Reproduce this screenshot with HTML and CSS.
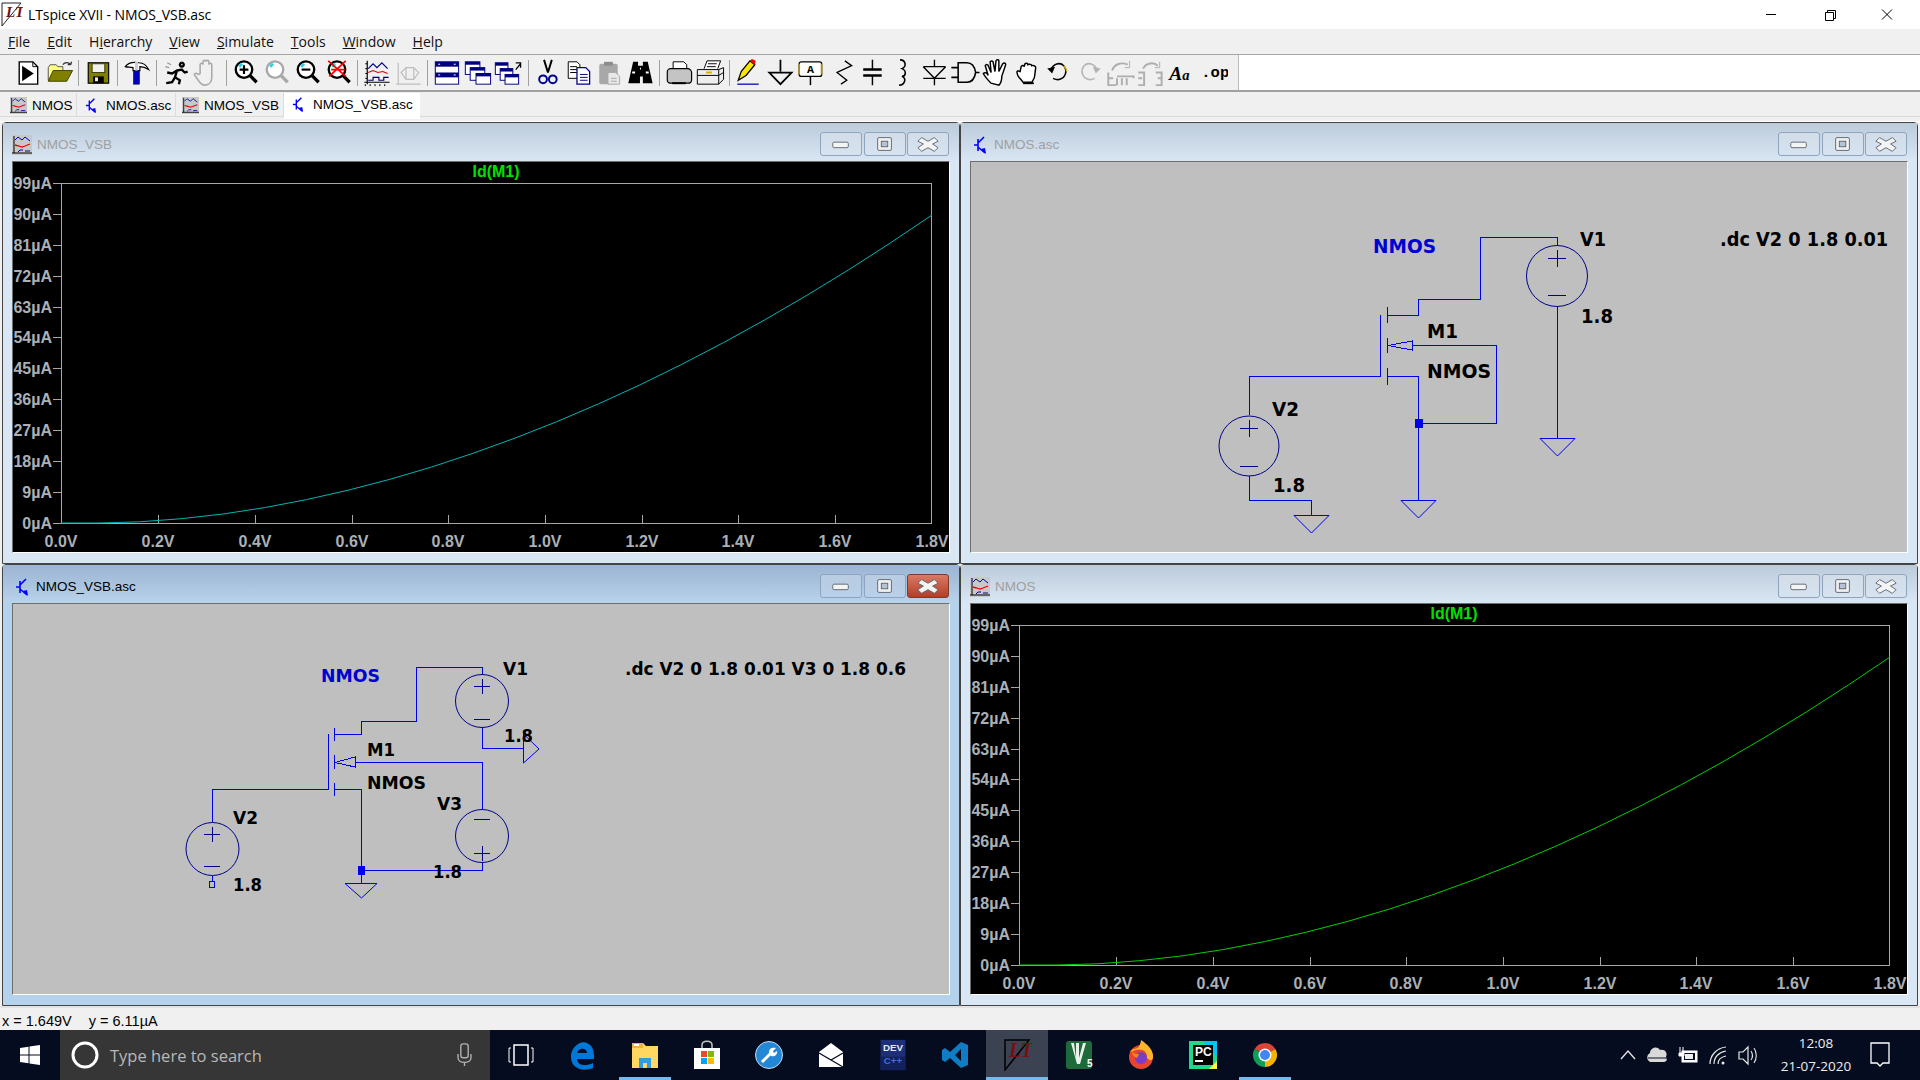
FILE: index.html
```html
<!DOCTYPE html>
<html lang="en">
<head>
<meta charset="utf-8">
<title>LTspice XVII - NMOS_VSB.asc</title>
<link rel="stylesheet" href="styles.css">
</head>
<body>
<svg class="defs" aria-hidden="true">
  <symbol id="i-plot" viewBox="0 0 20 20">
    <rect width="20" height="20" fill="#c8c8c8"/>
    <path d="M2 1v17M0 18h20" stroke="#000" fill="none"/>
    <path d="M3 5l3-3 4 3 3-3 5 4" stroke="#00c" fill="none"/>
    <path d="M3 10l4 1 3 1 3-1 5-2" stroke="#e00" stroke-width="1.3" fill="none"/>
    <path d="M6 17l2-2h3M13 16h5" stroke="#00a" fill="none"/>
  </symbol>
  <symbol id="i-sch" viewBox="0 0 14 20">
    <path d="M1 10h4M5 4v12M5 8l6-6M5 12l7 6" stroke="#00f" stroke-width="1.6" fill="none"/>
    <path d="M8 14l5 5-1-6z" fill="#00f"/>
  </symbol>
  <symbol id="b-min" viewBox="0 0 42 24">
    <rect x="12" y="10" width="17" height="6" rx="1.5" fill="#f4f4f4" stroke="#5c6470"/>
  </symbol>
  <symbol id="b-max" viewBox="0 0 42 24">
    <rect x="13" y="5" width="15" height="14" rx="1.5" fill="#f0f0f0" stroke="#5c6470"/>
    <rect x="17" y="9" width="7" height="6" fill="#b4c4d6" stroke="#5c6470"/>
  </symbol>
  <symbol id="b-close" viewBox="0 0 42 24">
    <path d="M14 5l7 4 7-4 4 4-6 3 6 4-4 4-7-4-7 4-4-4 6-4-6-3z" fill="#f4f4f4" stroke="#5c6470" stroke-linejoin="round"/>
  </symbol>
  <symbol id="i-lens" viewBox="0 0 31 36">
    <circle cx="14" cy="15" r="8.5" fill="#fff" stroke="currentColor" stroke-width="2.4"/>
    <path d="M9 12l3-3" stroke="#2fd0e0" stroke-width="3"/>
    <path d="M20 21l7 7" stroke="currentColor" stroke-width="3.4"/>
  </symbol>
</svg>

<header class="titlebar">
  <svg class="app-icon" viewBox="0 0 22 26">
    <path d="M1 1h19L1 24z" fill="#fff" stroke="#222"/>
    <text class="lt-mark" x="5" y="15">LT</text>
  </svg>
  <span class="app-title">LTspice XVII - NMOS_VSB.asc</span>
  <div class="caption">
    <svg class="cap" viewBox="0 0 58 29"><path d="M24 14.5h10" stroke="#000"/></svg>
    <svg class="cap" viewBox="0 0 58 29"><path d="M25.5 12.5h8v8h-8zM27.5 12.5v-2h8v8h-2" fill="none" stroke="#000"/></svg>
    <svg class="cap" viewBox="0 0 58 29"><path d="M24 9.5l10 10M34 9.5l-10 10" stroke="#000"/></svg>
  </div>
</header>

<nav class="menubar">
  <span><u>F</u>ile</span><span><u>E</u>dit</span><span>H<u>i</u>erarchy</span><span><u>V</u>iew</span><span><u>S</u>imulate</span><span><u>T</u>ools</span><span><u>W</u>indow</span><span><u>H</u>elp</span>
</nav>

<div class="toolrow">
  <div class="toolbar">
    <svg class="tool" viewBox="0 0 31 36"><path d="M6 7h14l5 5v18H6z" fill="#fff" stroke="#000" stroke-width="1.4"/><path d="M20 7v5h5" fill="none" stroke="#000"/><path d="M9 11l12 8-12 8z" fill="#000"/></svg>
    <svg class="tool" viewBox="0 0 31 36"><path d="M4 13l2-3h6l2 2h5v14H4z" fill="#ffff80" stroke="#555"/><path d="M4 27l5-11h20l-6 11z" fill="#808000" stroke="#404000"/><path d="M19 10c2-3 6-3 8 0M27 10l1-3M27 10l-3 0" fill="none" stroke="#333" stroke-width="1.3"/></svg>
    <i class="sep"></i>
    <svg class="tool" viewBox="0 0 31 36"><rect x="5" y="8" width="21" height="21" fill="#808000" stroke="#000" stroke-width="1.2"/><rect x="9" y="9" width="13" height="9" fill="#f0f0f0" stroke="#404000"/><rect x="10" y="22" width="11" height="7" fill="#000"/><rect x="12" y="23" width="3" height="4" fill="#f0f0f0"/></svg>
    <i class="sep"></i>
    <svg class="tool" viewBox="0 0 31 36"><path d="M3 12c3-4 8-5 14-4 4 0 8 3 10 7-3-2-6-3-9-3v4h-7v-3c-3-1-5 0-8-1z" fill="#fff" stroke="#000" stroke-width="1.2"/><rect x="11.5" y="16" width="6" height="14" fill="#0000c0" stroke="#000" stroke-width=".6"/><path d="M13 7h3v9h-3z" fill="#ccc"/></svg>
    <i class="sep"></i>
    <svg class="tool" viewBox="0 0 31 36"><path d="M5 29l6-1 3-5 5 3-1 4M14 23l2-7 5-1 3 3 3-1M16 16l-5 3-5-1M21 8a2 2 0 1 0 .1 0" fill="none" stroke="#000" stroke-width="2.4"/><path d="M6 8l4 2M4 12l4 1" stroke="#999" stroke-width="1.3"/></svg>
    <svg class="tool" viewBox="0 0 31 36"><path d="M9 19v-9a1.5 1.5 0 0 1 3 0v-3a1.5 1.5 0 0 1 3 0v0a1.5 1.5 0 0 1 3 0v3a1.5 1.5 0 0 1 3 0v13c0 5-3 8-7 8-3 0-5-2-7-5l-4-6c1-2 3-1 4 0z" fill="#f0f0f0" stroke="#aaa" stroke-width="1.6"/></svg>
    <i class="sep"></i>
    <svg class="tool lens-on" viewBox="0 0 31 36"><use href="#i-lens"/><path d="M9.5 15h9M14 10.5v9" stroke="#000" stroke-width="2.2"/></svg>
    <svg class="tool lens-off" viewBox="0 0 31 36"><use href="#i-lens"/></svg>
    <svg class="tool lens-on" viewBox="0 0 31 36"><use href="#i-lens"/><path d="M9.5 15h9" stroke="#000" stroke-width="2.2"/></svg>
    <svg class="tool lens-on" viewBox="0 0 31 36"><use href="#i-lens"/><path d="M5 6l18 16M23 6L6 22M8 15h14" stroke="#f00" stroke-width="1.8"/></svg>
    <i class="sep"></i>
    <svg class="tool" viewBox="0 0 31 36"><path d="M5 6v24M2 28h26" stroke="#000" stroke-width="1.2"/><path d="M3 30v2M8 30v2M13 30v2M18 30v2M23 30v2M3 9h2M3 14h2M3 19h2M3 24h2" stroke="#000"/><path d="M6 14l5-5 4 4 5-5 6 6" stroke="#000080" fill="none" stroke-width="1.2"/><path d="M6 18l5-2 5 2 5-1 5 2" stroke="#e00000" fill="none" stroke-width="1.2"/><path d="M6 26h5v-3h6v3h5v-3h5" stroke="#000060" fill="none" stroke-width="1.2"/></svg>
    <svg class="tool" viewBox="0 0 31 36"><path d="M5 8v22M3 30h25M8 18l5-5h8l5 5-5 7h-8zM13 13v12M21 13v12" fill="none" stroke="#bdbdbd" stroke-width="1.2"/></svg>
    <i class="sep"></i>
    <svg class="tool" viewBox="0 0 31 36"><rect x="3" y="7" width="24" height="23" fill="#fff" stroke="#000080"/><rect x="3" y="7" width="24" height="5" fill="#000080"/><rect x="3" y="18" width="24" height="5" fill="#000080"/><path d="M6 9.5h2M22 9.5h2M6 20.5h2M22 20.5h2" stroke="#fff"/></svg>
    <svg class="tool" viewBox="0 0 31 36"><rect x="2" y="7" width="15" height="13" fill="#fff" stroke="#000080"/><rect x="2" y="7" width="15" height="3" fill="#000080"/><rect x="7" y="13" width="15" height="13" fill="#fff" stroke="#000080"/><rect x="7" y="13" width="15" height="3" fill="#000080"/><rect x="13" y="19" width="15" height="11" fill="#fff" stroke="#000080"/><rect x="13" y="19" width="15" height="3" fill="#000080"/></svg>
    <svg class="tool" viewBox="0 0 31 36"><rect x="2" y="8" width="13" height="12" fill="#fff" stroke="#000080"/><rect x="2" y="8" width="13" height="3" fill="#000080"/><rect x="7" y="14" width="13" height="12" fill="#fff" stroke="#000080"/><rect x="7" y="14" width="13" height="3" fill="#000080"/><rect x="12" y="20" width="14" height="10" fill="#fff" stroke="#000080"/><rect x="12" y="20" width="14" height="3" fill="#000080"/><path d="M23 15l5-6M23 8h5v5" fill="none" stroke="#000" stroke-width="1.3"/></svg>
    <i class="sep"></i>
    <svg class="tool" viewBox="0 0 31 36"><path d="M12 5l4 13M20 5l-4 13" stroke="#000" stroke-width="2"/><circle cx="11" cy="25" r="4" fill="none" stroke="#000090" stroke-width="2"/><circle cx="21" cy="25" r="4" fill="none" stroke="#000090" stroke-width="2"/></svg>
    <svg class="tool" viewBox="0 0 31 36"><path d="M5 7h9l3 3v14H5z" fill="#fff" stroke="#000"/><path d="M7 12h7M7 15h7M7 18h7" stroke="#000"/><path d="M14 13h9l4 4v13H14z" fill="#fff" stroke="#000080" stroke-width="1.3"/><path d="M17 20h8M17 23h8M17 26h8" stroke="#000080"/></svg>
    <svg class="tool" viewBox="0 0 31 36"><rect x="5" y="9" width="19" height="21" rx="2" fill="#a8a8a8"/><rect x="10" y="7" width="9" height="4" fill="#8c8c8c"/><path d="M14 18h8l4 4v8H14z" fill="#e8e8e8" stroke="#a8a8a8"/><path d="M17 24h6M17 27h6" stroke="#a8a8a8"/></svg>
    <svg class="tool" viewBox="0 0 31 36"><path d="M8 7h5v4h5V7h5l5 22h-10v-7h-3v7H3z" fill="#000"/><path d="M7 18h3M21 18h3M15 14h1" stroke="#fff" stroke-width="2"/></svg>
    <i class="sep"></i>
    <svg class="tool" viewBox="0 0 31 36"><path d="M9 15V7h11l3 3v5" fill="#fff" stroke="#000"/><path d="M3 17c0-2 2-3 3-3h18c2 0 4 2 4 4v8c0 2-2 3-3 3H6c-2 0-3-2-3-3z" fill="#c4c4c4" stroke="#000" stroke-width="1.2"/><path d="M8 29h14" stroke="#000" stroke-width="2"/></svg>
    <svg class="tool" viewBox="0 0 31 36"><path d="M9 14l3-8h14l-3 8" fill="#fff" stroke="#000"/><path d="M13 9h9M12 12h9" stroke="#000"/><path d="M2 15h22l5-2v12l-5 5H2z" fill="#eee" stroke="#000"/><path d="M2 21h22M24 15v15M24 21l5-3" stroke="#000"/><path d="M11 18h6" stroke="#d8b000" stroke-width="2"/></svg>
    <i class="sep"></i>
    <svg class="tool" viewBox="0 0 31 36"><path d="M4 26l3-9 9-11 5 4-9 11z" fill="#f8e800" stroke="#000" stroke-width="1.3"/><path d="M16 6l2-2 4 2-1 4z" fill="#f00000"/><path d="M3 30h22" stroke="#0000c0" stroke-width="1.3"/></svg>
    <svg class="tool" viewBox="0 0 31 36"><path d="M15.5 5v12M4 18h23L15.5 30z" fill="none" stroke="#000" stroke-width="1.8"/></svg>
    <svg class="tool" viewBox="0 0 31 36"><rect x="4" y="7" width="23" height="15" rx="2" fill="#fff" stroke="#000" stroke-width="1.4"/><path d="M4 9v11M27 9v11" stroke="#b09000" stroke-width="1.6"/><text class="tool-a" x="15.5" y="19">A</text><path d="M15.5 22v9" stroke="#000" stroke-width="1.5"/></svg>
    <svg class="tool" viewBox="0 0 31 36"><path d="M19 6l7 5-15 7 10 8-6 4" fill="none" stroke="#000" stroke-width="1.4"/></svg>
    <svg class="tool" viewBox="0 0 31 36"><path d="M15.5 5v10M15.5 21v10" stroke="#000" stroke-width="1.5"/><path d="M6 15h19M6 21h19" stroke="#000" stroke-width="2.6"/></svg>
    <svg class="tool" viewBox="0 0 31 36"><path d="M12 5c6 0 7 7 2 9 5 2 4 8 0 8 5 2 3 9-3 9" fill="none" stroke="#000" stroke-width="1.6"/></svg>
    <svg class="tool" viewBox="0 0 31 36"><path d="M15.5 5v7M15.5 24v7M4 12h23M4 24h23M4 12l11.5 12L27 12" fill="none" stroke="#000" stroke-width="1.4"/></svg>
    <svg class="tool" viewBox="0 0 31 36"><path d="M8 8h9c5 0 8 4 9 10-1 6-4 10-9 10H8zM1 13h7M1 23h7M26 18h4" fill="none" stroke="#000" stroke-width="1.6"/></svg>
    <svg class="tool" viewBox="0 0 31 36"><path d="M10 29c-3-3-6-6-8-10 2-2 4 0 5 2L4 11c1-2 3-1 3 0l3 7-1-11c2-2 3 0 3 0l2 10 1-11c1-2 3-1 3 0v11l4-8c2-2 3 0 3 1l-4 12c0 4-1 7-3 9z" fill="#fff" stroke="#000" stroke-width="1.5"/></svg>
    <svg class="tool" viewBox="0 0 31 36"><path d="M11 28c-2-3-6-6-6-9-1-3 1-3 3-2l1-5c1-2 3-1 3 0l1-3c2-1 3 0 3 1 2-1 4 0 4 1 2-1 4 1 4 2l-1 8c0 3-2 5-3 7z" fill="#fff" stroke="#000" stroke-width="1.5"/><path d="M11 29h11" stroke="#000" stroke-width="2"/></svg>
    <svg class="tool" viewBox="0 0 31 36"><path d="M8 15c2-6 9-8 13-4 4 5 2 12-4 14-3 1-5 0-7-1" fill="none" stroke="#000" stroke-width="1.6"/><path d="M21 11c2 2 3 4 3 6" fill="none" stroke="#d8b000" stroke-width="1.6"/><path d="M4 14l8-2-3 7z" fill="#000"/></svg>
    <svg class="tool" viewBox="0 0 31 36"><path d="M23 15c-2-6-9-8-13-4-4 5-2 12 4 14 3 1 5 0 7-1" fill="none" stroke="#b4b4b4" stroke-width="1.6"/><path d="M27 14l-8-2 3 7z" fill="#b4b4b4"/></svg>
    <svg class="tool" viewBox="0 0 31 36"><path d="M4 18V31h8M4 24h5M13 24v7M18 24v7M23 24v7M13 22h17v2M8 16c2-7 10-9 16-6" fill="none" stroke="#aeaeae" stroke-width="2"/><path d="M26 6v7h-5" fill="none" stroke="#aeaeae"/></svg>
    <svg class="tool" viewBox="0 0 31 36"><path d="M3 18h6v13H3M3 24h4M21 18h6v13h-6M23 24h4M8 14c3-6 11-7 15-3" fill="none" stroke="#aeaeae" stroke-width="2"/><path d="M25 7v6h-5" fill="none" stroke="#aeaeae"/></svg>
    <svg class="tool" viewBox="0 0 31 36"><text class="tool-aa" x="3" y="26">A<tspan class="tool-aa-s">a</tspan></text></svg>
    <svg class="tool" viewBox="0 0 31 36"><text class="tool-op" x="4" y="23">.op</text></svg>
  </div>
  <div class="toolfill"></div>
</div>

<div class="tabs">
  <div class="tab"><svg class="ti-plot"><use href="#i-plot"/></svg>NMOS</div>
  <div class="tab"><svg class="ti-sch"><use href="#i-sch"/></svg>NMOS.asc</div>
  <div class="tab"><svg class="ti-plot"><use href="#i-plot"/></svg>NMOS_VSB</div>
  <div class="tab tab-on"><svg class="ti-sch"><use href="#i-sch"/></svg>NMOS_VSB.asc</div>
</div>

<main class="mdi">
  <!-- top-left: plot -->
  <section class="win">
    <div class="win-title">
      <svg class="wi-plot"><use href="#i-plot"/></svg><span class="win-name">NMOS_VSB</span>
      <div class="win-btns">
        <svg class="wb"><use href="#b-min"/></svg><svg class="wb"><use href="#b-max"/></svg><svg class="wb"><use href="#b-close"/></svg>
      </div>
    </div>
    <div class="client plot">
      <svg class="canvas" viewBox="13 162 936 390">
        <text class="trace-name" x="496" y="177">Id(M1)</text>
        <rect class="axis" x="61.5" y="183.5" width="870" height="340"/>
        <path class="axis" d="M53 183.5h8M53 214.5h8M53 245.5h8M53 276.5h8M53 307.5h8M53 337.5h8M53 368.5h8M53 399.5h8M53 430.5h8M53 461.5h8M53 492.5h8M53 523.5h8M158.5 515v8M255.5 515v8M352.5 515v8M448.5 515v8M545.5 515v8M642.5 515v8M738.5 515v8M835.5 515v8"/>
        <g class="ylab">
          <text x="52" y="189">99µA</text><text x="52" y="220">90µA</text><text x="52" y="251">81µA</text><text x="52" y="282">72µA</text><text x="52" y="313">63µA</text><text x="52" y="343">54µA</text><text x="52" y="374">45µA</text><text x="52" y="405">36µA</text><text x="52" y="436">27µA</text><text x="52" y="467">18µA</text><text x="52" y="498">9µA</text><text x="52" y="529">0µA</text>
        </g>
        <g class="xlab">
          <text x="61" y="547">0.0V</text><text x="158" y="547">0.2V</text><text x="255" y="547">0.4V</text><text x="352" y="547">0.6V</text><text x="448" y="547">0.8V</text><text x="545" y="547">1.0V</text><text x="642" y="547">1.2V</text><text x="738" y="547">1.4V</text><text x="835" y="547">1.6V</text><text x="932" y="547">1.8V</text>
        </g>
        <polyline class="curve curve-teal" points="61,523 98,523 139.7,521.8 181.4,518.7 223.1,514 264.8,507.6 306.5,499.6 348.2,490.2 389.9,479.3 431.6,467 473.3,453.2 515,438.1 556.7,421.7 598.4,403.9 640.1,384.8 681.8,364.3 723.5,342.6 765.2,319.6 806.9,295.3 848.6,269.8 890.3,243 932,215"/>
      </svg>
    </div>
  </section>

  <!-- top-right: schematic -->
  <section class="win">
    <div class="win-title">
      <svg class="wi-sch"><use href="#i-sch"/></svg><span class="win-name">NMOS.asc</span>
      <div class="win-btns">
        <svg class="wb"><use href="#b-min"/></svg><svg class="wb"><use href="#b-max"/></svg><svg class="wb"><use href="#b-close"/></svg>
      </div>
    </div>
    <div class="client sch">
      <svg class="canvas" viewBox="971 162 936 390">
        <path class="wire" d="M1557.5 245V237.5H1480.5V299.5H1418.5V315.5H1387.5M1557.5 306V438M1387.5 376.5H1418.5V500M1418.5 423.5H1496.5V345.5H1412M1380.5 376.5H1249.5V415M1249.5 476V500.5H1311.5V515"/>
        <path class="wire" d="M1387.5 307V323M1380.5 315V376M1387.5 338V353M1387.5 368V385"/>
        <path class="wire" d="M1388 345.5L1412 341V350z"/>
        <rect class="dot" x="1415" y="419" width="8" height="9"/>
        <path class="gnd" d="M1540 438.5H1575L1557.5 456zM1401 500.5H1436L1418.5 518zM1294 515.5H1329L1311.5 533z"/>
        <circle class="src" cx="1557" cy="276" r="30.5"/>
        <circle class="src" cx="1249" cy="446" r="30"/>
        <path class="src" d="M1548 258.5h18M1557.5 250v17M1548 295.5h18M1240 428.5h18M1249.5 420v17M1240 466.5h18"/>
        <text class="blue-lbl big" x="1373" y="253" textLength="63" lengthAdjust="spacingAndGlyphs">NMOS</text>
        <text class="lbl big" x="1580" y="246" textLength="26" lengthAdjust="spacingAndGlyphs">V1</text>
        <text class="lbl big" x="1581" y="323" textLength="32" lengthAdjust="spacingAndGlyphs">1.8</text>
        <text class="lbl big" x="1427" y="338" textLength="31" lengthAdjust="spacingAndGlyphs">M1</text>
        <text class="lbl big" x="1427" y="378" textLength="64" lengthAdjust="spacingAndGlyphs">NMOS</text>
        <text class="lbl big" x="1272" y="416" textLength="27" lengthAdjust="spacingAndGlyphs">V2</text>
        <text class="lbl big" x="1273" y="492" textLength="32" lengthAdjust="spacingAndGlyphs">1.8</text>
        <text class="lbl big" transform="translate(1720 246) scale(.887 1)">.dc V2 0 1.8 0.01</text>
      </svg>
    </div>
  </section>

  <!-- bottom-left: active schematic -->
  <section class="win win-on">
    <div class="win-title">
      <svg class="wi-sch"><use href="#i-sch"/></svg><span class="win-name">NMOS_VSB.asc</span>
      <div class="win-btns">
        <svg class="wb"><use href="#b-min"/></svg><svg class="wb"><use href="#b-max"/></svg><svg class="wb wb-close"><use href="#b-close"/></svg>
      </div>
    </div>
    <div class="client sch">
      <svg class="canvas" viewBox="13 604 936 390">
        <path class="wire" d="M482.5 674V667.5H416.5V721.5H361.5V734.5H334.5M482.5 727V748.5H523M334.5 789.5H361.5V883M361.5 870.5H482.5V862M482.5 809V762.5H355M328.5 789.5H212.5V822M212.5 876V881"/>
        <path class="wire" d="M334.5 728V741M328.5 734V789M334.5 755V769M334.5 783V796"/>
        <path class="wire" d="M335 762.5L355 757V767z"/>
        <rect class="dot" x="358" y="866" width="7" height="9"/>
        <rect class="pin" x="209.5" y="881.5" width="5" height="6"/>
        <path class="gnd" d="M345 883.5H377L361.5 898zM523.5 734V763L539 749z"/>
        <circle class="src" cx="482" cy="701" r="26.5"/>
        <circle class="src" cx="482" cy="836" r="26.5"/>
        <circle class="src" cx="212.5" cy="849" r="26.5"/>
        <path class="src" d="M474 686.5h16M482.5 679v15M474 719.5h16M474 819.5h16M474 853.5h16M482.5 846v15M204 834.5h16M212.5 827v15M204 866.5h16"/>
        <text class="blue-lbl mid" x="321" y="682" textLength="59" lengthAdjust="spacingAndGlyphs">NMOS</text>
        <text class="lbl mid" x="503" y="675" textLength="25" lengthAdjust="spacingAndGlyphs">V1</text>
        <text class="lbl mid" x="625" y="675" textLength="281" lengthAdjust="spacingAndGlyphs">.dc V2 0 1.8 0.01 V3 0 1.8 0.6</text>
        <text class="lbl mid" x="504" y="742" textLength="29" lengthAdjust="spacingAndGlyphs">1.8</text>
        <text class="lbl mid" x="367" y="756" textLength="28" lengthAdjust="spacingAndGlyphs">M1</text>
        <text class="lbl mid" x="367" y="789" textLength="59" lengthAdjust="spacingAndGlyphs">NMOS</text>
        <text class="lbl mid" x="437" y="810" textLength="25" lengthAdjust="spacingAndGlyphs">V3</text>
        <text class="lbl mid" x="233" y="824" textLength="25" lengthAdjust="spacingAndGlyphs">V2</text>
        <text class="lbl mid" x="233" y="891" textLength="29" lengthAdjust="spacingAndGlyphs">1.8</text>
        <text class="lbl mid" x="433" y="878" textLength="29" lengthAdjust="spacingAndGlyphs">1.8</text>
      </svg>
    </div>
  </section>

  <!-- bottom-right: plot -->
  <section class="win">
    <div class="win-title">
      <svg class="wi-plot"><use href="#i-plot"/></svg><span class="win-name">NMOS</span>
      <div class="win-btns">
        <svg class="wb"><use href="#b-min"/></svg><svg class="wb"><use href="#b-max"/></svg><svg class="wb"><use href="#b-close"/></svg>
      </div>
    </div>
    <div class="client plot">
      <svg class="canvas" viewBox="13 162 936 390">
        <text class="trace-name" x="496" y="177">Id(M1)</text>
        <rect class="axis" x="61.5" y="183.5" width="870" height="340"/>
        <path class="axis" d="M53 183.5h8M53 214.5h8M53 245.5h8M53 276.5h8M53 307.5h8M53 337.5h8M53 368.5h8M53 399.5h8M53 430.5h8M53 461.5h8M53 492.5h8M53 523.5h8M158.5 515v8M255.5 515v8M352.5 515v8M448.5 515v8M545.5 515v8M642.5 515v8M738.5 515v8M835.5 515v8"/>
        <g class="ylab">
          <text x="52" y="189">99µA</text><text x="52" y="220">90µA</text><text x="52" y="251">81µA</text><text x="52" y="282">72µA</text><text x="52" y="313">63µA</text><text x="52" y="343">54µA</text><text x="52" y="374">45µA</text><text x="52" y="405">36µA</text><text x="52" y="436">27µA</text><text x="52" y="467">18µA</text><text x="52" y="498">9µA</text><text x="52" y="529">0µA</text>
        </g>
        <g class="xlab">
          <text x="61" y="547">0.0V</text><text x="158" y="547">0.2V</text><text x="255" y="547">0.4V</text><text x="352" y="547">0.6V</text><text x="448" y="547">0.8V</text><text x="545" y="547">1.0V</text><text x="642" y="547">1.2V</text><text x="738" y="547">1.4V</text><text x="835" y="547">1.6V</text><text x="932" y="547">1.8V</text>
        </g>
        <polyline class="curve curve-green" points="61,523 98,523 139.7,521.8 181.4,518.7 223.1,514 264.8,507.6 306.5,499.6 348.2,490.2 389.9,479.3 431.6,467 473.3,453.2 515,438.1 556.7,421.7 598.4,403.9 640.1,384.8 681.8,364.3 723.5,342.6 765.2,319.6 806.9,295.3 848.6,269.8 890.3,243 932,215"/>
      </svg>
    </div>
  </section>
</main>

<div class="status"><span>x = 1.649V</span><span>y = 6.11µA</span></div>

<footer class="taskbar">
  <div class="start">
    <svg class="start-logo" viewBox="0 0 20 20"><path d="M0 3l8.5-1.2v7.7H0zM9.5 1.600L20 0v9.500H9.500zM0 10.500h8.500v7.700L0 17zM9.500 10.500H20V20L9.500 18.400z" fill="#fff"/></svg>
  </div>
  <div class="search">
    <svg class="search-ring" viewBox="0 0 30 30"><circle cx="15" cy="15" r="12" fill="none" stroke="#fff" stroke-width="3"/></svg>
    <span class="search-text">Type here to search</span>
    <svg class="search-mic" viewBox="0 0 16 26"><rect x="4" y="1" width="8" height="15" rx="2.5" fill="none" stroke="#b0b0b0" stroke-width="1.5"/><path d="M1 12v4c0 3 3 5 7 5s7-2 7-5v-4M8 21v4" fill="none" stroke="#b0b0b0" stroke-width="1.5"/></svg>
  </div>
  <div class="apps">
    <div class="app"><svg class="ai" viewBox="0 0 30 30"><rect x="8" y="5" width="14" height="20" fill="none" stroke="#fff" stroke-width="1.5"/><path d="M5 8H3v14h2M25 8h2v14h-2" fill="none" stroke="#fff"/></svg></div>
    <div class="app"><svg class="ai" viewBox="0 0 30 30"><path d="M26 19H9c0 6 8 8 16 4v5c-10 4-21 1-22-10C2 8 12 0 19 3c5 2 7 7 7 13z" fill="#0078d7"/><path d="M9 13h10c0-5-8-6-10 0z" fill="#060c1f"/></svg></div>
    <div class="app app-open"><svg class="ai" viewBox="0 0 30 30"><path d="M2 3h11l3 3h12v22H2z" fill="#ffd761"/><path d="M2 3h11v5H2z" fill="#e8b73c"/><rect x="4" y="4" width="5" height="2" fill="#fff"/><path d="M9 28V18h12v10h-4v-5h-4v5z" fill="#2f9ee0"/></svg></div>
    <div class="app"><svg class="ai" viewBox="0 0 30 30"><path d="M10 9V5c0-5 10-5 10 0v4" fill="none" stroke="#c4c4c4" stroke-width="1.5"/><rect x="2" y="8" width="26" height="21" fill="#fff"/><rect x="9" y="11" width="6" height="6" fill="#e74c24"/><rect x="16" y="11" width="6" height="6" fill="#7fba00"/><rect x="9" y="18" width="6" height="6" fill="#00a4ef"/><rect x="16" y="18" width="6" height="6" fill="#ffb900"/></svg></div>
    <div class="app"><svg class="ai" viewBox="0 0 30 30"><circle cx="15" cy="15" r="13.5" fill="#2387d6" stroke="#bfdcf2"/><path d="M8 22l9-9" stroke="#fff" stroke-width="3"/><path d="M15 12c0-4 4-5 7-4l-3 3 1 2 3-2c1 4-3 6-6 5z" fill="#fff"/></svg></div>
    <div class="app"><svg class="ai" viewBox="0 0 30 30"><path d="M3 12L15 3l12 9v15H3z" fill="#fff"/><path d="M3 13l12 7 12-7M3 13l24 14" fill="none" stroke="#060c1f" stroke-width="1.3"/></svg></div>
    <div class="app"><svg class="ai" viewBox="0 0 30 36"><rect x="1" y="1" width="28" height="34" fill="#1c2f78"/><rect x="1" y="20" width="28" height="15" fill="#13205a"/><text class="dev-a" x="15" y="14">DEV</text><text class="dev-b" x="15" y="28">C++</text></svg></div>
    <div class="app"><svg class="ai" viewBox="0 0 30 30"><path d="M21 2l7 3v20l-7 3-11-10-5 4-3-2v-10l3-2 5 4zM21 9l-6 6 6 6z" fill="#0f7cc4" fill-rule="evenodd"/></svg></div>
    <div class="app app-active"><svg class="ai" viewBox="0 0 26 32"><path d="M1 1h24L1 31z" fill="none" stroke="#000" stroke-width="1.5"/><text class="lt-big" x="5" y="18">LT</text></svg></div>
    <div class="app"><svg class="ai" viewBox="0 0 30 30"><rect x="2" y="1" width="26" height="28" rx="3" fill="#1f6a3a"/><path d="M7 3l6 21h3l6-21h-3l-4 15V3h-3v15L10 3z" fill="#e6f2e8"/><text class="ve-a" x="23" y="27">5</text></svg></div>
    <div class="app"><svg class="ai" viewBox="0 0 30 30"><circle cx="15" cy="17" r="12" fill="#e8452e"/><path d="M4 12c3-4 6-3 8-4 2-3 3-6 3-8 6 4 13 10 12 18-2 4-4 2-6 0 1-7-6-10-11-8z" fill="#ffb528"/><circle cx="15" cy="18" r="6" fill="#7b3cc8"/><path d="M6 11c2 3 4 3 7 3l-2 4c-3-1-5-3-5-7z" fill="#ff7b1c"/></svg></div>
    <div class="app"><svg class="ai" viewBox="0 0 30 30"><path d="M1 1h28v28H1z" fill="#21d789"/><path d="M14 1h15v16z" fill="#07c3f2"/><path d="M1 29h20l8-8v8z" fill="#fcf84a"/><rect x="5" y="5" width="20" height="20" fill="#000"/><text class="pc-a" x="7" y="16">PC</text><rect x="7" y="20" width="8" height="2" fill="#fff"/></svg></div>
    <div class="app app-open"><svg class="ai" viewBox="0 0 30 30"><path d="M15 15L4.6 9A12 12 0 0 1 25.4 9z" fill="#db4437"/><path d="M15 15L25.4 9A12 12 0 0 1 15 27z" fill="#f4b400"/><path d="M15 15L15 27A12 12 0 0 1 4.6 9z" fill="#0f9d58"/><circle cx="15" cy="15" r="6.5" fill="#fff"/><circle cx="15" cy="15" r="5" fill="#4285f4"/></svg></div>
  </div>
  <div class="tray">
    <svg class="ti" viewBox="0 0 30 30"><path d="M8 19l7-8 7 8" fill="none" stroke="#e8e8e8" stroke-width="1.3"/></svg>
    <svg class="ti" viewBox="0 0 30 30"><path d="M7 22a5 5 0 0 1 0-9c0-5 7-8 10-3 5-1 8 3 6 7 2 3 0 5-3 5z" fill="#d8d8d8"/><path d="M5 18h20" stroke="#060c1f"/></svg>
    <svg class="ti" viewBox="0 0 30 30"><rect x="9" y="11" width="15" height="11" fill="#fff" stroke="#fff"/><rect x="11" y="13" width="11" height="7" fill="#060c1f"/><rect x="12" y="14" width="8" height="5" fill="#eee"/><path d="M7 7v6M10 7v6M6 13h5v3H6z" stroke="#fff" fill="#fff"/></svg>
    <svg class="ti" viewBox="0 0 30 30"><g fill="none" stroke="#e8e8e8" stroke-width="1.2"><path d="M7 24c0-9 7-16 16-17"/><path d="M11 24c0-7 5-12 12-13"/><path d="M15 24c0-4 3-7 8-8"/></g><circle cx="20" cy="23" r="1.5" fill="#e8e8e8"/></svg>
    <svg class="ti" viewBox="0 0 30 30"><path d="M6 12h4l5-5v17l-5-5H6z" fill="none" stroke="#e8e8e8" stroke-width="1.2"/><path d="M18 11c2 3 2 6 0 9M21 8c3 4 3 11 0 15" fill="none" stroke="#e8e8e8" stroke-width="1.1"/></svg>
    <div class="clock"><span>12:08</span><span>21-07-2020</span></div>
    <svg class="notif" viewBox="0 0 22 28"><path d="M2 2h18v20h-6l-3 3-3-3H2z" fill="none" stroke="#fff" stroke-width="1.3"/></svg>
  </div>
</footer>
</body>
</html>
```
FILE: styles.css
```css
* { box-sizing: border-box; }
html, body { margin: 0; padding: 0; }
body {
  width: 1920px;
  height: 1080px;
  overflow: hidden;
  display: flex;
  flex-direction: column;
  background: #f0f0f0;
  font-family: "Liberation Sans", Arial, sans-serif;
  color: #000;
}
.defs { width: 0; height: 0; position: absolute; }

/* title bar */
.titlebar { height: 29px; flex: none; display: flex; align-items: center; background: #fff; }
.app-icon { width: 22px; height: 26px; margin: 0 5px 0 1px; }
.lt-mark { font: italic bold 15px "Liberation Serif", serif; fill: #6d1212; }
.app-title { font: 14px "Open Sans", sans-serif; letter-spacing: -0.1px; }
.caption { margin-left: auto; display: flex; margin-right: 4px; }
.cap { width: 58px; height: 29px; }

/* menu */
.menubar { height: 25px; flex: none; display: flex; align-items: center; gap: 17px; padding-left: 8px; font: 14px "Open Sans", sans-serif; color: #111; }

/* toolbar */
.toolrow { height: 38px; flex: none; display: flex; border-top: 1px solid #a6a6a6; border-bottom: 2px solid #a0a0a0; }
.toolbar { width: 1239px; padding-left: 13px; display: flex; align-items: center; border-right: 1px solid #bbb; }
.toolfill { flex: 1; background: #fff; }
.tool { width: 30.9px; height: 35px; flex: none; }
.sep { width: 1px; height: 26px; margin: 0 3.5px; background: #a0a0a0; flex: none; }
.lens-on { color: #000; }
.lens-off { color: #a8a8a8; }
.tool-a { font: bold 12px "Liberation Mono", monospace; text-anchor: middle; }
.tool-aa { font: italic bold 20px "Liberation Serif", serif; }
.tool-aa-s { font-size: 15px; }
.tool-op { font: bold 16px "Liberation Mono", monospace; }

/* tabs */
.tabs { height: 30px; flex: none; display: flex; padding: 1px 0 5px 4px; font-size: 13.5px; position: relative; border-bottom: 1px solid #fff; }
.tabs::after { content: ""; position: absolute; left: 0; right: 0; top: 24px; height: 1px; background: #d9d9d9; }
.tab { display: flex; align-items: center; height: 24px; border-right: 1px solid #dcdcdc; padding: 0 5px 0 6px; }
.tab:nth-child(1) { width: 73px; }
.tab:nth-child(2) { width: 99px; padding-left: 8px; }
.tab:nth-child(3) { width: 108px; }
.tab-on { width: 136px; height: 26px; padding: 0 0 3px 8px; background: #fff; position: relative; z-index: 1; border: 0; }
.ti-plot { width: 17px; height: 17px; margin-right: 5px; flex: none; }
.ti-sch { width: 12px; height: 17px; margin-right: 9px; flex: none; }

/* MDI */
.mdi { height: 884px; flex: none; display: grid; grid-template-columns: 958px 958px; grid-template-rows: 442px 442px; padding-left: 2px; }
.win { --edge: #d9e6f4; display: flex; flex-direction: column; border: 1px solid #444; border-radius: 4px 4px 0 0; background: var(--edge); padding: 0 9px 10px; }
.win-on { --edge: #b4d2ec; }
.win-title { height: 38px; flex: none; display: flex; align-items: center; margin: 0 -9px; padding: 5px 9px 0; background: linear-gradient(#bccbda, #d9e6f4); }
.win-on .win-title { background: linear-gradient(#9ab4d2, #b9d3ec); }
.win-name { font-size: 13.5px; color: #a0a0a0; margin-left: 4px; }
.win-on .win-name { color: #000; }
.wi-plot { width: 20px; height: 20px; flex: none; margin-right: 1px; }
.wi-sch { width: 14px; height: 20px; flex: none; margin: 0 3px; }
.win-btns { margin-left: auto; margin-right: 1px; display: flex; gap: 1.5px; padding-bottom: 2px; }
.wb { width: 42px; height: 24px; border: 1px solid #8ea4bf; border-radius: 3px; background: linear-gradient(rgba(255,255,255,.25), rgba(255,255,255,.05)); }
.wb-close { background: linear-gradient(#d97a66, #b43e25); border-color: #7c3a2c; }
.client { height: 392px; flex: none; border: 1px solid; border-color: #6e6e6e #fff #fff #6e6e6e; }
.plot { background: #000; }
.sch { background: #bfbfbf; }
.canvas { display: block; width: 100%; height: 100%; }

/* plot drawing */
.axis { fill: none; stroke: #a8a8a8; stroke-width: 1; shape-rendering: crispEdges; }
.ylab text, .xlab text { font: bold 16px "Liberation Sans", Arial, sans-serif; fill: #aab0b6; }
.ylab text { text-anchor: end; }
.xlab text { text-anchor: middle; }
.trace-name { font: bold 16px "Liberation Sans", Arial, sans-serif; fill: #00e000; text-anchor: middle; }
.curve { fill: none; stroke-width: 1; }
.curve-teal { stroke: #00b4b4; }
.curve-green { stroke: #00d000; }

/* schematic drawing */
.wire { fill: none; stroke: #0000f0; stroke-width: 1; shape-rendering: crispEdges; }
.gnd { fill: none; stroke: #0000f0; stroke-width: 1; }
.src { fill: none; stroke: #00008c; stroke-width: 1; }
.dot { fill: #0000f0; }
.pin { fill: none; stroke: #0000f0; shape-rendering: crispEdges; }
.lbl, .blue-lbl { font-family: "DejaVu Sans", sans-serif; font-weight: bold; }
.big { font-size: 20px; }
.mid { font-size: 18px; }
.lbl { fill: #000; }
.blue-lbl { fill: #0000d0; }

/* status */
.status { height: 24px; flex: none; display: flex; gap: 17px; align-items: center; padding: 3px 0 0 2px; font-size: 14.5px; border-top: 2px solid #e2e2e2; }

/* taskbar */
.taskbar { height: 50px; flex: none; display: flex; background: #060c1f; color: #fff; }
.start { width: 60px; display: flex; align-items: center; justify-content: center; }
.start-logo { width: 20px; height: 20px; }
.search { width: 430px; background: #363636; display: flex; align-items: center; padding: 0 18px 0 10px; }
.search-ring { width: 30px; height: 30px; margin-right: 10px; }
.search-text { font: 16.5px "Open Sans", sans-serif; color: #b8b8b8; }
.search-mic { width: 15px; height: 24px; margin-left: auto; }
.apps { display: flex; }
.app { width: 62px; height: 50px; display: flex; align-items: center; justify-content: center; position: relative; }
.ai { width: 30px; height: 32px; }
.app-open::after, .app-active::after { content: ""; position: absolute; bottom: 0; left: 5px; right: 5px; height: 3px; background: #76b9ed; }
.app-active { background: #3b4252; }
.app-active::after { left: 0; right: 0; }
.dev-a, .dev-b { font: bold 11px "Liberation Sans", sans-serif; text-anchor: middle; }
.dev-a { fill: #e8e8e8; }
.dev-b { fill: #3c6ee0; }
.lt-big { font: italic bold 20px "Liberation Serif", serif; fill: #7a0f0f; }
.ve-a { font: bold 10px "Liberation Sans", sans-serif; fill: #fff; }
.pc-a { font: bold 12px "Liberation Sans", sans-serif; fill: #fff; }
.tray { margin-left: auto; display: flex; align-items: center; padding-right: 29px; }
.ti { width: 30px; height: 30px; flex: none; }
.clock { width: 96px; margin-left: 5px; display: flex; flex-direction: column; align-items: center; gap: 4px; font: 13.5px/19px "Open Sans", sans-serif; color: #eee; }
.notif { width: 22px; height: 28px; margin-left: 5px; }
```
